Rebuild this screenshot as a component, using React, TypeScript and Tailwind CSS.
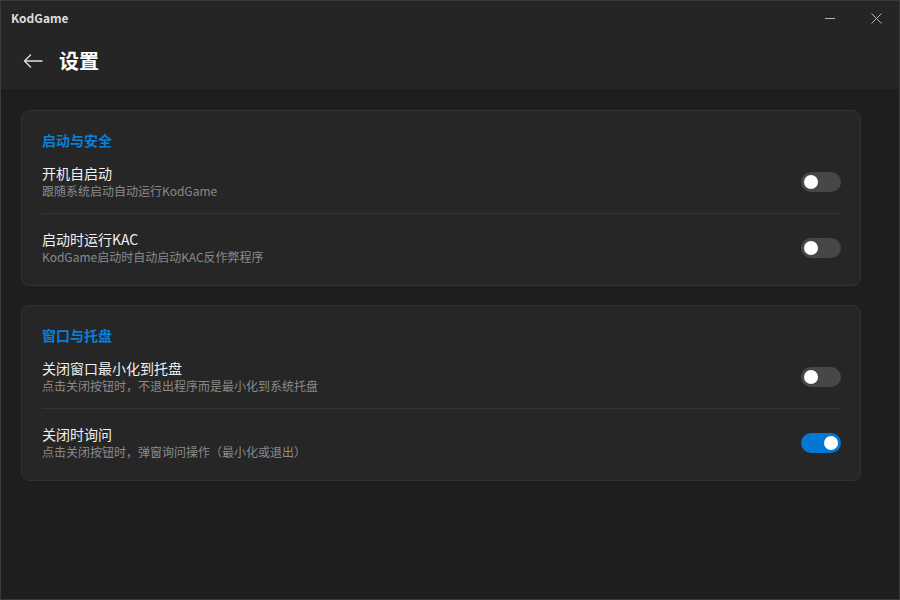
import React from "react";

function Toggle({ on }: { on: boolean }) {
  return (
    <div
      className={
        on
          ? "w-[40px] h-[20px] rounded-full bg-[#0078d4] flex items-center justify-end px-[3px] shrink-0"
          : "w-[40px] h-[20px] rounded-full bg-[#474747] flex items-center justify-start px-[3px] shrink-0"
      }
    >
      <div className="w-[14px] h-[14px] rounded-full bg-white" />
    </div>
  );
}

function Row({ title, desc, on, top, bottom }: { title: string; desc: string; on: boolean; top: string; bottom: string }) {
  return (
    <div className={`flex items-center justify-between ${top} ${bottom}`}>
      <div className="flex flex-col">
        <div className="text-[14px] leading-[18px] text-[#f0f0f0]">{title}</div>
        <div className="text-[12px] leading-[18px] text-[#8a8a8a]">{desc}</div>
      </div>
      <Toggle on={on} />
    </div>
  );
}

function Card({ title, rows }: { title: string; rows: { t: string; d: string; on: boolean }[] }) {
  return (
    <div className="w-[840px] rounded-[8px] border border-[#323232] bg-[#262626] pl-[20px] pr-[19px] pt-[19px]">
      <div className="text-[14px] leading-[20px] font-bold text-[#0a7fd6]">{title}</div>
      <Row title={rows[0].t} desc={rows[0].d} on={rows[0].on} top="pt-[14px]" bottom="pb-[13px]" />
      <div className="h-px bg-[#353535]" />
      <Row title={rows[1].t} desc={rows[1].d} on={rows[1].on} top="pt-[16px]" bottom="pb-[19px]" />
    </div>
  );
}

export default function App() {
  return (
    <div
      className="w-[900px] h-[600px] border border-[#3a3a3a] bg-[#1e1e1e] flex flex-col overflow-hidden"
      style={{ fontFamily: '"Noto Sans CJK SC", "Noto Sans", sans-serif' }}
    >
      <div className="bg-[#252525] h-[88px] flex flex-col shrink-0">
        <div className="h-[34px] flex items-center justify-between">
          <div className="pl-[10px] text-[12px] font-bold text-[#dcdcdc]">KodGame</div>
          <div className="flex items-center h-full">
            <div className="w-[46px] h-full flex items-center justify-center">
              <svg width="10" height="10" viewBox="0 0 10 10">
                <line x1="0" y1="5.5" x2="10" y2="5.5" stroke="#b5b5b5" strokeWidth="1" />
              </svg>
            </div>
            <div className="w-[46px] h-full flex items-center justify-center">
              <svg width="11" height="11" viewBox="0 0 11 11">
                <path d="M0.5 0.5 L10.5 10.5 M10.5 0.5 L0.5 10.5" stroke="#b5b5b5" strokeWidth="1" />
              </svg>
            </div>
          </div>
        </div>
        <div className="flex items-center h-[52px] pl-[22px]">
          <svg width="20" height="14" viewBox="0 0 20 14" className="mr-[16px]">
            <path d="M19 7 H1.5 M7.5 1 L1.5 7 L7.5 13" stroke="#e0e0e0" strokeWidth="1.4" fill="none" strokeLinecap="round" strokeLinejoin="round" />
          </svg>
          <div className="text-[20px] font-bold text-white leading-none">设置</div>
        </div>
      </div>
      <div className="flex flex-col gap-[19px] pl-[20px] pt-[21px]">
        <Card
          title="启动与安全"
          rows={[
            { t: "开机自启动", d: "跟随系统启动自动运行KodGame", on: false },
            { t: "启动时运行KAC", d: "KodGame启动时自动启动KAC反作弊程序", on: false },
          ]}
        />
        <Card
          title="窗口与托盘"
          rows={[
            { t: "关闭窗口最小化到托盘", d: "点击关闭按钮时，不退出程序而是最小化到系统托盘", on: false },
            { t: "关闭时询问", d: "点击关闭按钮时，弹窗询问操作（最小化或退出）", on: true },
          ]}
        />
      </div>
    </div>
  );
}
